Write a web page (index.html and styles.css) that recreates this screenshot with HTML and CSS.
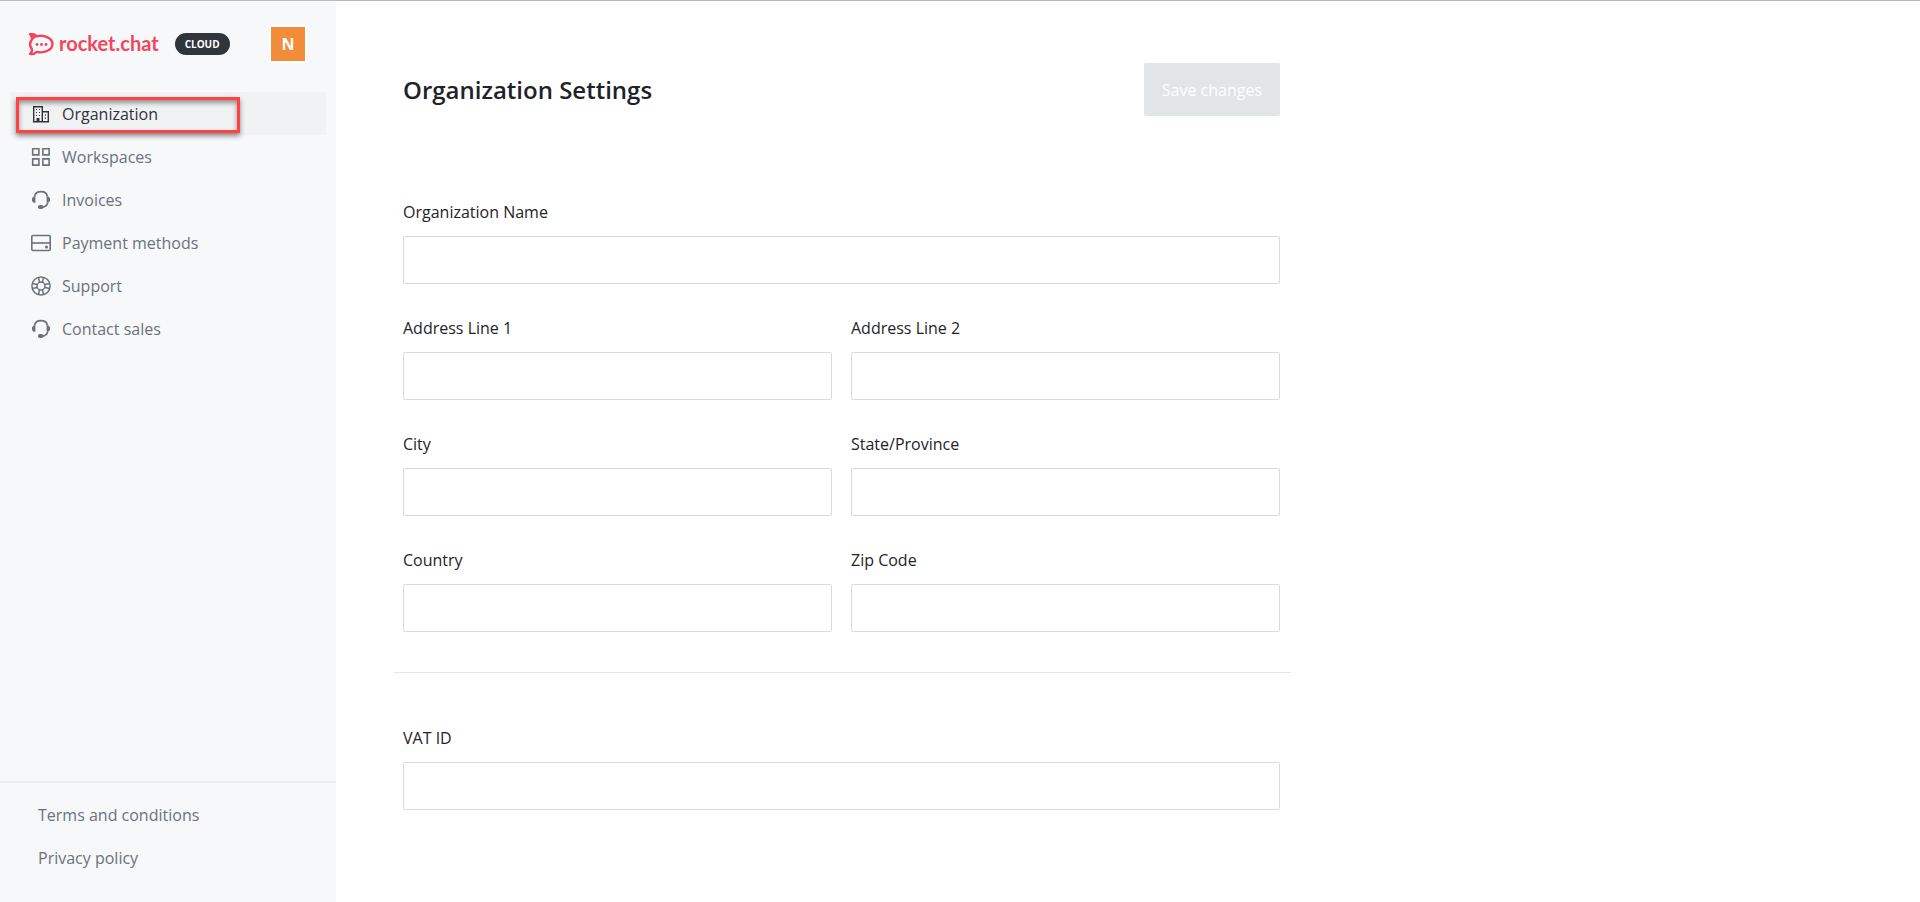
FILE: index.html
```html
<!DOCTYPE html>
<html lang="en">
<head>
<meta charset="utf-8">
<title>Organization Settings</title>
<link rel="stylesheet" href="styles.css">
</head>
<body>
<svg class="sprite" aria-hidden="true">
  <symbol id="headset" viewBox="0 0 20 20"><path d="M3.600 6.500C4.200 3.300 6.700 1.700 10 1.700s5.800 1.600 6.400 4.800M16.700 13c-.8 2.300-2.500 3.900-5.200 4.100" fill="none" stroke="currentColor" stroke-width="1.700"/><path d="M4.400 6.600v6.200H2.600L1 11V8.300l1.500-1.700zM15.600 6.600v6.200h1.800L19 11V8.300l-1.500-1.700z" fill="currentColor"/><rect x="7" y="15" width="5.400" height="4" rx="1.800" fill="currentColor"/></symbol>
</svg>
<div class="app">
  <aside class="sidebar">
    <header class="brand">
      <a class="logo" href="#">
        <svg class="logo-mark" viewBox="0 0 26 23" aria-hidden="true"><path d="M2 1.200c2.700-.5 5 .3 6.700 2.100C16.500 1.500 24.500 5.200 24.500 11s-8 9.700-15.800 7.800c-1.700 2-4 2.700-6.700 2.100 1.800-1.700 2.400-3.400 1.800-5-2.200-2.900-2.200-6.400 0-9.200.7-2-.1-3.700-1.800-5.500z" fill="none" stroke="currentColor" stroke-width="2.400" stroke-linejoin="round"/><path d="M1.500 1c3-1 6 .4 7.500 2.500L4 7.500C4.500 4.500 3.500 2.500 1.500 1z" fill="currentColor"/><circle cx="9" cy="11.500" r="1.450" fill="currentColor"/><circle cx="13.500" cy="11.500" r="1.450" fill="currentColor"/><circle cx="18" cy="11.500" r="1.450" fill="currentColor"/></svg>
        <span>rocket.chat</span>
      </a>
      <span class="badge">CLOUD</span>
      <button class="avatar" type="button">N</button>
    </header>
    <nav class="nav">
      <a class="nav-item active" href="#"><svg viewBox="0 0 20 20" aria-hidden="true"><path d="M2.700 17.800V2.700h8.600v15.100M11.300 7.700h6v10.100M1.900 17.800h16.200" fill="none" stroke="currentColor" stroke-width="1.400"/><path d="M5 5h1v1H5zM8 5h1v1H8zM5 8h1v1H5zM8 8h1v1H8zM5 11h1v1H5zM8 11h1v1H8zM13.800 10.500h1.200v1.200h-1.200zM13.800 13.500h1.200v1.200h-1.200zM5.500 14h3v4h-3z" fill="currentColor"/></svg>Organization<span class="highlight"></span></a>
      <a class="nav-item" href="#"><svg viewBox="0 0 20 20" aria-hidden="true"><path d="M1.700 1.700h6.200v6.200H1.700zM11.900 1.700h6.200v6.200h-6.200zM1.700 11.900h6.200v6.200H1.700zM11.900 11.900h6.200v6.200h-6.200z" fill="none" stroke="currentColor" stroke-width="1.600"/></svg>Workspaces</a>
      <a class="nav-item" href="#"><svg aria-hidden="true"><use href="#headset"/></svg>Invoices</a>
      <a class="nav-item" href="#"><svg viewBox="0 0 20 20" aria-hidden="true"><rect x=".8" y="2.500" width="18.400" height="15" rx="1.200" fill="none" stroke="currentColor" stroke-width="1.600"/><path d="M1 10h18" stroke="currentColor" stroke-width="1.600"/><circle cx="15.500" cy="13.900" r="1.500" fill="currentColor"/></svg>Payment methods</a>
      <a class="nav-item" href="#"><svg viewBox="0 0 20 20" aria-hidden="true"><g fill="none" stroke="currentColor" stroke-width="1.500"><circle cx="10" cy="10" r="9.100"/><circle cx="10" cy="10" r="4"/><path d="M7.500 1.300l1 4.900M12.500 1.300l-1 4.900M7.500 18.700l1-4.900M12.500 18.700l-1-4.900M1.300 7.500l4.900 1M1.300 12.500l4.900-1M18.700 7.500l-4.900 1M18.700 12.500l-4.900-1"/></g></svg>Support</a>
      <a class="nav-item" href="#"><svg aria-hidden="true"><use href="#headset"/></svg>Contact sales</a>
    </nav>
    <footer class="legal">
      <a href="#">Terms and conditions</a>
      <a href="#">Privacy policy</a>
    </footer>
  </aside>
  <main class="content">
    <form class="settings">
      <header class="page-head">
        <h1>Organization Settings</h1>
        <button class="save" type="submit" disabled>Save changes</button>
      </header>
      <div class="fields">
        <div class="field wide"><label for="org">Organization Name</label><input id="org" type="text"></div>
        <div class="field"><label for="addr1">Address Line 1</label><input id="addr1" type="text"></div>
        <div class="field"><label for="addr2">Address Line 2</label><input id="addr2" type="text"></div>
        <div class="field"><label for="city">City</label><input id="city" type="text"></div>
        <div class="field"><label for="state">State/Province</label><input id="state" type="text"></div>
        <div class="field"><label for="country">Country</label><input id="country" type="text"></div>
        <div class="field"><label for="zip">Zip Code</label><input id="zip" type="text"></div>
      </div>
      <hr>
      <div class="fields">
        <div class="field wide"><label for="vat">VAT ID</label><input id="vat" type="text"></div>
      </div>
    </form>
  </main>
</div>
</body>
</html>
```
FILE: styles.css
```css
* { box-sizing: border-box; }
body {
  margin: 0;
  font: 16px/24px "Open Sans", "Noto Sans", sans-serif;
  color: #1f2329;
  background: #fff;
}
.sprite { display: none; }
.app {
  display: flex;
  min-height: 100vh;
  border-top: 1px solid #b9babc;
}
.sidebar {
  display: flex;
  flex-direction: column;
  flex: 0 0 336px;
  background: #f7f8fa;
}
.brand {
  display: flex;
  align-items: center;
  padding: 24px 29px 29px 28px;
}
.logo {
  display: flex;
  align-items: center;
  gap: 5px;
  color: #f5455c;
  font: 700 20px/24px Lato, sans-serif;
  text-decoration: none;
}
.logo-mark { width: 26px; height: 23px; }
.logo span { padding-bottom: 2px; }
.badge {
  margin-left: 16px;
  padding: 0 10px;
  border-radius: 11px;
  background: #2f343d;
  color: #fff;
  font-size: 10px;
  font-weight: 700;
  line-height: 22px;
}
.avatar {
  width: 38px;
  height: 38px;
  margin-left: auto;
  padding: 0;
  border: 2px solid #fff;
  background: #f38c39;
  color: #fff;
  font: 700 16px/24px "Open Sans", sans-serif;
}
.nav {
  display: flex;
  flex-direction: column;
  padding: 0 10px;
}
.nav-item {
  position: relative;
  display: flex;
  align-items: center;
  gap: 11px;
  padding: 10px 21px 9px;
  color: #6c727a;
  text-decoration: none;
}
.nav-item svg { width: 20px; height: 20px; }
.nav-item.active { background: #f1f2f4; color: #2f343d; }
.highlight {
  position: absolute;
  left: 6px;
  top: 5px;
  width: 224px;
  height: 36px;
  border: 3px solid #ff4343;
  box-shadow: 0 3px 5px rgba(0, 0, 0, .45), inset 0 3px 5px rgba(0, 0, 0, .4);
}
.legal {
  display: flex;
  flex-direction: column;
  gap: 19px;
  margin-top: auto;
  padding: 20px 38px 32px;
  border-top: 2px solid #eceef0;
}
.legal a { color: #6c727a; text-decoration: none; }
.content { flex: 1; padding: 62px 67px; }
.settings { max-width: 877px; }
.page-head {
  display: flex;
  align-items: center;
  justify-content: space-between;
  margin-bottom: 84px;
}
h1 { margin: 0; font-size: 24px; font-weight: 600; line-height: 32px; }
.save {
  padding: 15px 18px 14px;
  border: 0;
  border-radius: 2px;
  background: #e1e5e8;
  color: #fff;
  font: inherit;
}
.fields {
  display: grid;
  grid-template-columns: 1fr 1fr;
  gap: 32px 19px;
}
.field { display: flex; flex-direction: column; gap: 12px; }
.wide { grid-column: 1 / -1; }
.field input {
  width: 100%;
  height: 48px;
  padding: 0 16px;
  border: 1px solid #d8dadc;
  border-radius: 2px;
  background: #fff;
  font: inherit;
}
hr {
  height: 1px;
  margin: 40px -11px 53px -9px;
  border: 0;
  background: #e4e5e7;
}
```
